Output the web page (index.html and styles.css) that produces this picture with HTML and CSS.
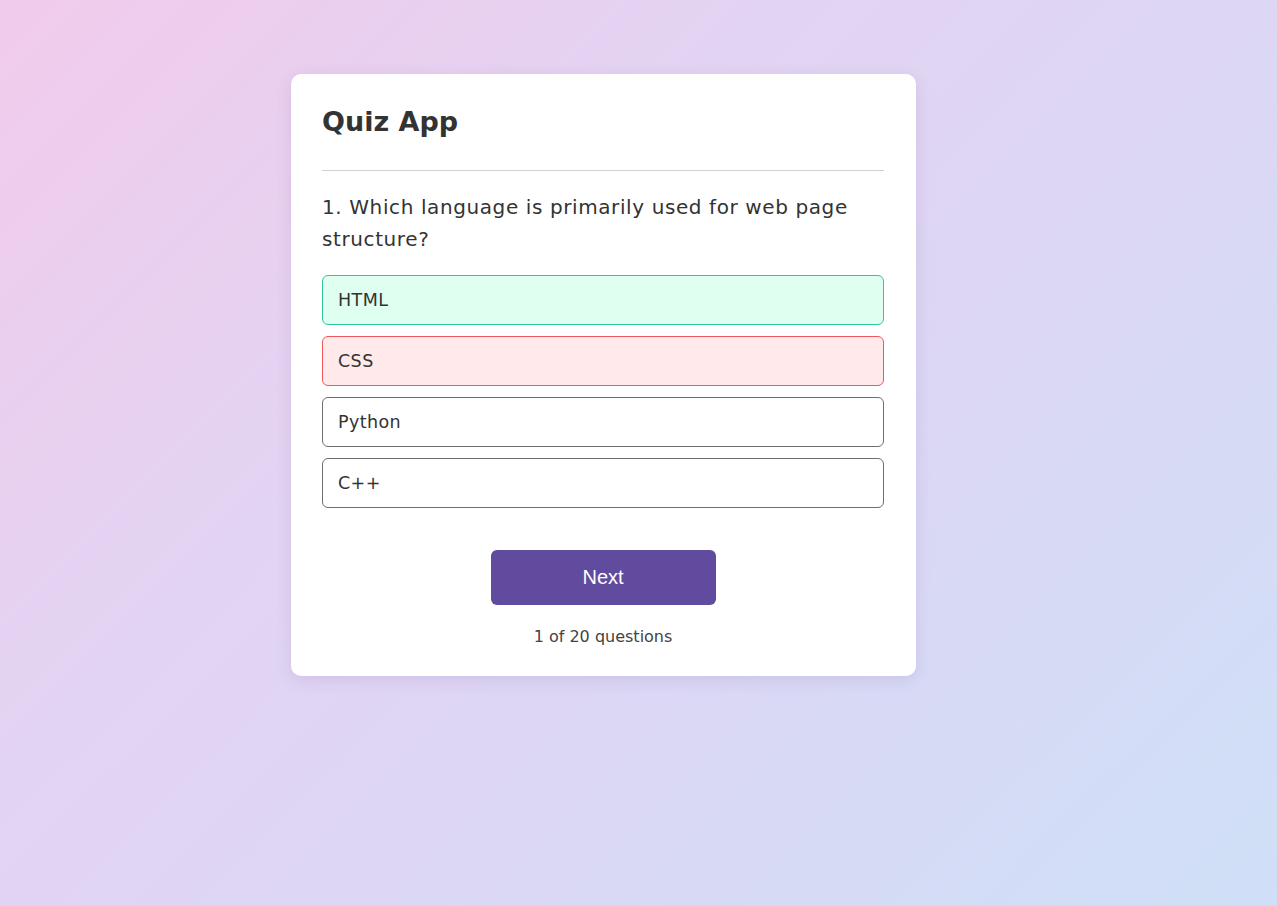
FILE: index.html
```html
<!DOCTYPE html>
<html lang="en">
<head>
<meta charset="utf-8">
<title>Quiz App</title>
<link rel="stylesheet" href="styles.css">
</head>
<body>
  <main class="page">
    <section class="card">
      <h1 class="title">Quiz App</h1>
      <hr class="divider">
      <h2 class="question">1. Which language is primarily used for web page structure?</h2>
      <div class="options">
        <button class="option correct">HTML</button>
        <button class="option wrong">CSS</button>
        <button class="option">Python</button>
        <button class="option">C++</button>
      </div>
      <button class="next">Next</button>
      <p class="progress">1 of 20 questions</p>
    </section>
  </main>
</body>
</html>
```
FILE: styles.css
```css
* { box-sizing: border-box; }
html, body { height: 100%; }
body {
  margin: 0;
  font-family: "DejaVu Sans", "Open Sans", sans-serif;
  color: #333;
  background: linear-gradient(135deg, #f1cbec 0%, #e3d3f2 35%, #dcd7f4 60%, #cfdff7 100%);
}
.page {
  min-height: 100%;
  display: flex;
  justify-content: center;
  padding-top: 74px;
  padding-right: 70px;
}
.card {
  width: 625px;
  height: 602px;
  background: #fff;
  border-radius: 10px;
  padding: 24px 32px 0 31px;
  box-shadow: 0 4px 16px rgba(90, 60, 140, 0.12);
  display: flex;
  flex-direction: column;
}
.title {
  margin: 0;
  font-size: 27px;
  font-weight: 700;
  line-height: 48px;
  color: #333;
}
.divider {
  border: 0;
  border-top: 1px solid #d0d0d0;
  margin: 24px 0 20px;
}
.question {
  margin: 0 0 20px;
  font-size: 20px;
  font-weight: 400;
  line-height: 32px;
  letter-spacing: 0.6px;
  color: #333;
}
.options {
  display: flex;
  flex-direction: column;
  gap: 11px;
}
.option {
  height: 50px;
  border: 1px solid #6f6f6f;
  border-radius: 6px;
  background: #fff;
  text-align: left;
  padding: 0 15px;
  font-family: inherit;
  font-size: 17.5px;
  letter-spacing: 0.4px;
  color: #333;
}
.option.correct { background: #dffff1; border-color: #2fc99a; }
.option.wrong { background: #ffe9ea; border-color: #f4565a; }
.next {
  align-self: center;
  margin-top: 42px;
  width: 225px;
  height: 55px;
  border: 0;
  border-radius: 6px;
  background: #604b9f;
  color: #fff;
  font-family: "Liberation Sans", Arial, sans-serif;
  font-size: 20px;
}
.progress {
  margin: 22px 0 0;
  text-align: center;
  font-size: 16px;
  color: #444;
}
```
